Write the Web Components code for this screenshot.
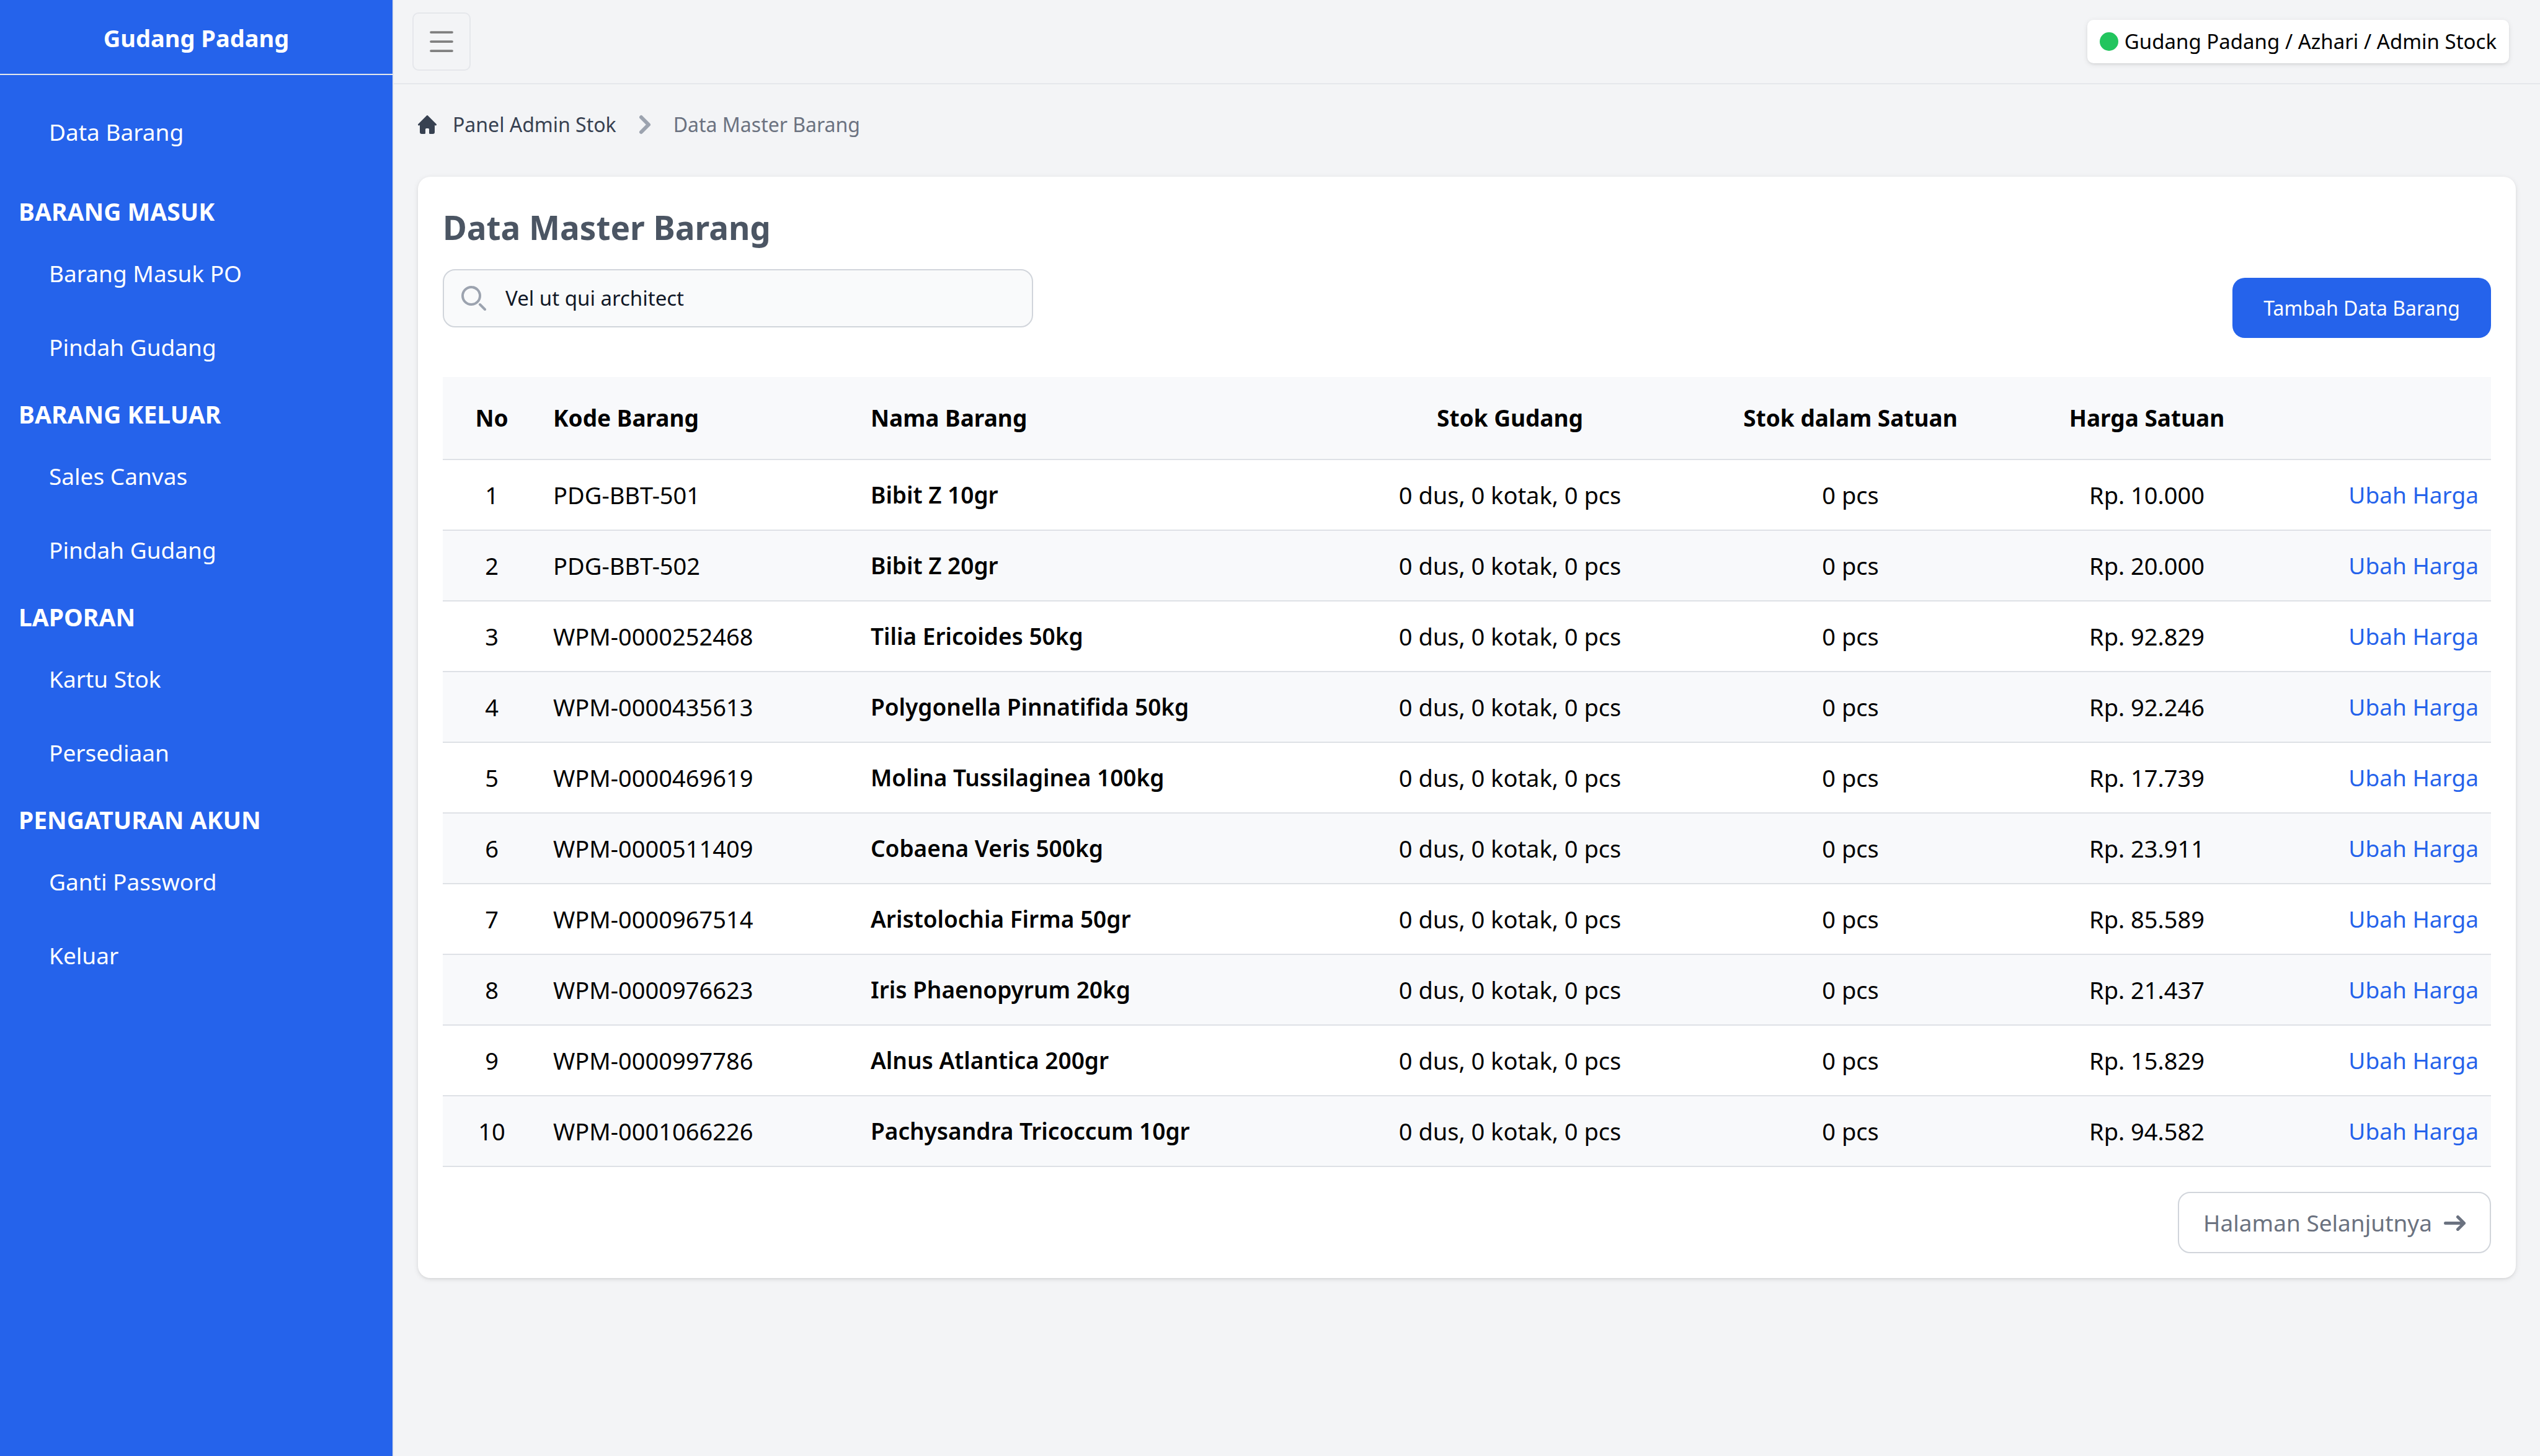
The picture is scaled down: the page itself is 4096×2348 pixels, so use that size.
<!DOCTYPE html>
<html lang="id">
<head>
<meta charset="UTF-8">
<meta name="viewport" content="width=device-width, initial-scale=1.0">
<title>Data Master Barang</title>
<style>
    body {
        margin: 0;
        background: #f3f4f6;
        color: #000;
        font-family: "Noto Sans", sans-serif;
        font-size: 37px;
        line-height: 60px;
        --blue: #2563eb;
        --line: #e5e7eb;
        --shadow: 0 2px 8px rgba(0,0,0,.1), 0 2px 5px -2px rgba(0,0,0,.1);
    }
</style>
</head>
<body>
<app-shell>
    <side-bar slot="side" name="Gudang Padang">
        <nav-item>Data Barang</nav-item>
        <nav-group label="BARANG MASUK">
            <nav-item>Barang Masuk PO</nav-item>
            <nav-item>Pindah Gudang</nav-item>
        </nav-group>
        <nav-group label="BARANG KELUAR">
            <nav-item>Sales Canvas</nav-item>
            <nav-item>Pindah Gudang</nav-item>
        </nav-group>
        <nav-group label="LAPORAN">
            <nav-item>Kartu Stok</nav-item>
            <nav-item>Persediaan</nav-item>
        </nav-group>
        <nav-group label="PENGATURAN AKUN">
            <nav-item>Ganti Password</nav-item>
            <nav-item>Keluar</nav-item>
        </nav-group>
    </side-bar>
    <top-bar slot="top">Gudang Padang / Azhari / Admin Stock</top-bar>
    <bread-crumb parent="Panel Admin Stok">Data Master Barang</bread-crumb>
    <content-card heading="Data Master Barang">
        <search-box slot="tools" value="Vel ut qui architect"></search-box>
        <primary-button slot="tools">Tambah Data Barang</primary-button>
        <stock-table></stock-table>
        <next-button slot="footer">Halaman Selanjutnya</next-button>
    </content-card>
</app-shell>

<script>
class AppShell extends HTMLElement{
    constructor(){
        super();
        this.attachShadow({mode:'open'});
        this.shadowRoot.innerHTML=`<style>
        :host {
            display: grid;
            grid-template-columns: 635px 1fr;
            min-height: 100vh;
        }
        .page {
            min-width: 0;
        }
        main {
            padding: 40px 39px;
        }
        </style>
        <slot name="side"></slot>
        <div class="page">
            <slot name="top"></slot>
            <main><slot></slot></main>
        </div>`;
    }
}
customElements.define('app-shell',AppShell);

class SideBar extends HTMLElement{
    constructor(){
        super();
        this.attachShadow({mode:'open'});
        this.shadowRoot.innerHTML=`<style>
        :host {
            display: block;
            background: var(--blue);
            border-right: 2px solid var(--line);
            color: #fff;
        }
        header {
            padding: 31px 0 28px;
            border-bottom: 2px solid var(--line);
            text-align: center;
            font-size: 38px;
            font-weight: 700;
        }
        nav {
            padding-top: 32px;
        }
        ::slotted(nav-item) {
            margin-bottom: 20px;
        }
        </style>
        <header>${this.getAttribute('name')}</header>
        <nav><slot></slot></nav>`;
    }
}
customElements.define('side-bar',SideBar);

class NavGroup extends HTMLElement{
    constructor(){
        super();
        this.attachShadow({mode:'open'});
        this.shadowRoot.innerHTML=`<style>
        :host {
            display: block;
        }
        h2 {
            margin: 0;
            padding: 19px 30px 10px;
            font-size: 39px;
            font-weight: 700;
        }
        </style>
        <h2>${this.getAttribute('label')}</h2>
        <slot></slot>`;
    }
}
customElements.define('nav-group',NavGroup);

class NavItem extends HTMLElement{
    constructor(){
        super();
        this.attachShadow({mode:'open'});
        this.shadowRoot.innerHTML=`<style>
        :host {
            display: block;
        }
        a {
            display: block;
            padding: 30px 79px 29px;
            color: inherit;
            text-decoration: none;
        }
        </style>
        <a href="#"><slot></slot></a>`;
    }
}
customElements.define('nav-item',NavItem);

class TopBar extends HTMLElement{
    constructor(){
        super();
        this.attachShadow({mode:'open'});
        this.shadowRoot.innerHTML=`<style>
        :host {
            display: flex;
            align-items: center;
            justify-content: space-between;
            padding: 20px 50px 20px 30px;
            border-bottom: 2px solid var(--line);
        }
        button {
            display: grid;
            place-items: center;
            width: 94px;
            height: 94px;
            padding: 0;
            border: 2px solid var(--line);
            border-radius: 10px;
            background: none;
        }
        .user {
            display: flex;
            align-items: center;
            gap: 10px;
            padding: 10px 20px;
            border-radius: 10px;
            background: #fff;
            box-shadow: var(--shadow);
            font-size: 33px;
            line-height: 50px;
        }
        .dot {
            width: 30px;
            height: 30px;
            border-radius: 50%;
            background: #22c55e;
        }
        </style>
        <button type="button" aria-label="Menu">
            <svg width="60" height="60" viewBox="0 0 24 24" fill="none" stroke="#808080" stroke-width="1.5" stroke-linecap="round"><path d="M5.2 6h13.6M5.2 12h13.6M5.2 18h13.6"/></svg>
        </button>
        <div class="user"><span class="dot"></span><span><slot></slot></span></div>`;
    }
}
customElements.define('top-bar',TopBar);

class BreadCrumb extends HTMLElement{
    constructor(){
        super();
        this.attachShadow({mode:'open'});
        this.shadowRoot.innerHTML=`<style>
        :host {
            display: block;
            margin-bottom: 59px;
            font-size: 32px;
            line-height: 50px;
        }
        nav, a {
            display: flex;
            align-items: center;
        }
        a {
            gap: 26px;
            color: #374151;
            text-decoration: none;
        }
        .arrow {
            margin: -5px 16px;
        }
        .here {
            color: #6b7280;
        }
        </style>
        <nav aria-label="Breadcrumb">
            <a href="#">
                <svg width="30" height="30" viewBox="0 0 20 20" fill="currentColor"><path d="m19.707 9.293-2-2-7-7a1 1 0 0 0-1.414 0l-7 7-2 2a1 1 0 0 0 1.414 1.414L2 10.414V18a2 2 0 0 0 2 2h3a1 1 0 0 0 1-1v-4a1 1 0 0 1 1-1h2a1 1 0 0 1 1 1v4a1 1 0 0 0 1 1h3a2 2 0 0 0 2-2v-7.586l.293.293a1 1 0 0 0 1.414-1.414Z"/></svg>
                <span>${this.getAttribute('parent')}</span>
            </a>
            <svg class="arrow" width="60" height="60" viewBox="0 0 20 20" fill="#9ca3af"><path d="M7.293 14.707a1 1 0 010-1.414L10.586 10 7.293 6.707a1 1 0 011.414-1.414l4 4a1 1 0 010 1.414l-4 4a1 1 0 01-1.414 0z"/></svg>
            <span class="here"><slot></slot></span>
        </nav>`;
    }
}
customElements.define('bread-crumb',BreadCrumb);

class ContentCard extends HTMLElement{
    constructor(){
        super();
        this.attachShadow({mode:'open'});
        this.shadowRoot.innerHTML=`<style>
        :host {
            display: block;
            padding: 40px;
            border-radius: 20px;
            background: #fff;
            box-shadow: var(--shadow);
        }
        h1 {
            margin: 0 0 26px;
            color: #4b5563;
            font-size: 53px;
            line-height: 83px;
            font-weight: 700;
        }
        .tools {
            display: flex;
            align-items: flex-start;
            justify-content: space-between;
            margin-bottom: 63px;
        }
        .footer {
            display: flex;
            justify-content: flex-end;
            margin-top: 40px;
        }
        </style>
        <h1>${this.getAttribute('heading')}</h1>
        <div class="tools"><slot name="tools"></slot></div>
        <slot></slot>
        <div class="footer"><slot name="footer"></slot></div>`;
    }
}
customElements.define('content-card',ContentCard);

class SearchBox extends HTMLElement{
    constructor(){
        super();
        this.attachShadow({mode:'open'});
        this.shadowRoot.innerHTML=`<style>
        :host {
            display: block;
        }
        label {
            display: flex;
            align-items: center;
            gap: 31px;
            box-sizing: border-box;
            width: 952px;
            height: 94px;
            padding: 0 28px;
            border: 2px solid #d1d5db;
            border-radius: 20px;
            background: #f9fafb;
        }
        input {
            flex: 1;
            min-width: 0;
            padding: 0;
            border: 0;
            outline: 0;
            background: none;
            color: #111827;
            font: inherit;
            font-size: 33px;
            line-height: 50px;
        }
        </style>
        <label>
            <svg width="40" height="40" viewBox="0 0 20 20" fill="none" stroke="#9ca3af" stroke-width="2" stroke-linecap="round" stroke-linejoin="round"><path d="m19 19-4-4m0-7A7 7 0 1 1 1 8a7 7 0 0 1 14 0Z"/></svg>
            <input type="text" aria-label="Cari barang" value="${this.getAttribute('value')}">
        </label>`;
    }
}
customElements.define('search-box',SearchBox);

class PrimaryButton extends HTMLElement{
    constructor(){
        super();
        this.attachShadow({mode:'open'});
        this.shadowRoot.innerHTML=`<style>
        :host {
            display: block;
            padding-top: 14px;
        }
        button {
            display: block;
            padding: 24px 50px 23px;
            border: 0;
            border-radius: 20px;
            background: var(--blue);
            color: #fff;
            font: inherit;
            font-size: 32px;
            line-height: 50px;
        }
        </style>
        <button type="button"><slot></slot></button>`;
    }
}
customElements.define('primary-button',PrimaryButton);

class NextButton extends HTMLElement{
    constructor(){
        super();
        this.attachShadow({mode:'open'});
        this.shadowRoot.innerHTML=`<style>
        :host {
            display: block;
        }
        a {
            display: flex;
            align-items: center;
            gap: 19px;
            padding: 18px 39px 17px;
            border: 2px solid #d1d5db;
            border-radius: 20px;
            color: #6b7280;
            text-decoration: none;
        }
        </style>
        <a href="#"><span><slot></slot></span><svg width="35" height="25" viewBox="0 0 14 10" fill="none" stroke="currentColor" stroke-width="2" stroke-linecap="round" stroke-linejoin="round"><path d="M1 5h12m0 0L9 1m4 4L9 9"/></svg></a>`;
    }
}
customElements.define('next-button',NextButton);

const items=[
    ['PDG-BBT-501','Bibit Z 10gr','10.000'],
    ['PDG-BBT-502','Bibit Z 20gr','20.000'],
    ['WPM-0000252468','Tilia Ericoides 50kg','92.829'],
    ['WPM-0000435613','Polygonella Pinnatifida 50kg','92.246'],
    ['WPM-0000469619','Molina Tussilaginea 100kg','17.739'],
    ['WPM-0000511409','Cobaena Veris 500kg','23.911'],
    ['WPM-0000967514','Aristolochia Firma 50gr','85.589'],
    ['WPM-0000976623','Iris Phaenopyrum 20kg','21.437'],
    ['WPM-0000997786','Alnus Atlantica 200gr','15.829'],
    ['WPM-0001066226','Pachysandra Tricoccum 10gr','94.582']
];

class StockTable extends HTMLElement{
    constructor(){
        super();
        this.attachShadow({mode:'open'});
        let rows='';
        items.forEach(([code,name,price],i)=>{
            rows+=`<tr>
                <td>${i+1}</td>
                <td class="left">${code}</td>
                <td class="left name">${name}</td>
                <td>0 dus, 0 kotak, 0 pcs</td>
                <td>0 pcs</td>
                <td>Rp. ${price}</td>
                <td class="right"><a href="#">Ubah Harga</a></td>
            </tr>`;
        });
        this.shadowRoot.innerHTML=`<style>
        :host {
            display: block;
        }
        table {
            width: 100%;
            table-layout: fixed;
            border-spacing: 0;
        }
        th, td {
            height: 112px;
            padding: 0 20px;
            border-bottom: 2px solid #dee1e6;
            font-size: 38px;
            text-align: center;
            white-space: nowrap;
        }
        th {
            height: 132px;
            font-size: 37px;
            font-weight: 700;
        }
        thead tr, tbody tr:nth-child(even) {
            background: #f8f9fb;
        }
        .left {
            text-align: left;
        }
        .right {
            font-size: 37px;
            text-align: right;
        }
        .name {
            font-size: 37px;
            font-weight: 600;
        }
        a {
            color: var(--blue);
            text-decoration: none;
        }
        .no { width: 118px; }
        .code { width: 472px; }
        .stock { width: 538px; }
        .unit { width: 480px; }
        .price { width: 396px; }
        .edit { width: 297px; }
        </style>
        <table>
            <thead><tr>
                <th class="no">No</th>
                <th class="left code">Kode Barang</th>
                <th class="left">Nama Barang</th>
                <th class="stock">Stok Gudang</th>
                <th class="unit">Stok dalam Satuan</th>
                <th class="price">Harga Satuan</th>
                <th class="edit"></th>
            </tr></thead>
            <tbody>${rows}</tbody>
        </table>`;
    }
}
customElements.define('stock-table',StockTable);
</script>
</body>
</html>
